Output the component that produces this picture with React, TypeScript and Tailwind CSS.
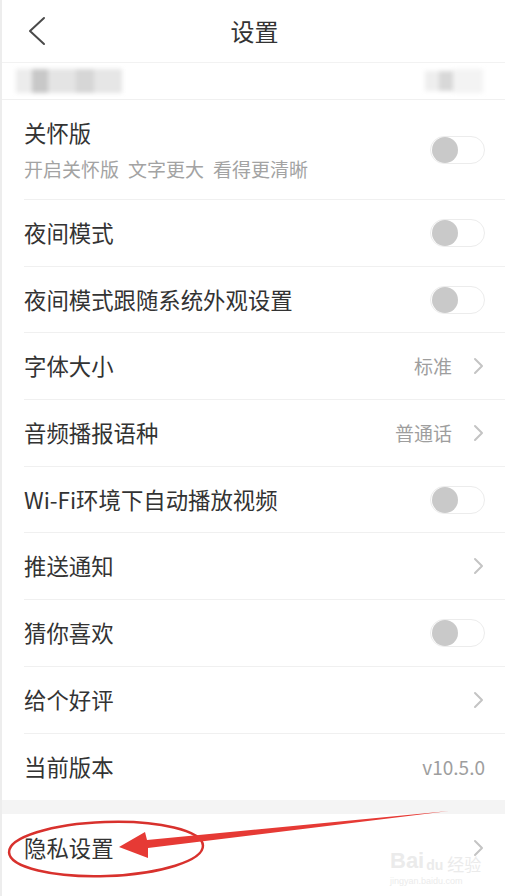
import React from 'react';

const font = { fontFamily: '"Noto Sans CJK SC", "Noto Sans", sans-serif' };

function Toggle() {
  return (
    <div className="w-[55px] h-[28px] rounded-full border border-[#ececec] bg-white flex items-center pl-[1px]">
      <div className="w-[26px] h-[26px] rounded-full bg-[#c9c9c9]" />
    </div>
  );
}

function Chevron({ gap = true }: { gap?: boolean }) {
  return (
    <svg width="12" height="18" viewBox="0 0 12 18" className={gap ? 'ml-[21px]' : ''}>
      <polyline points="2,2 9,9 2,16" fill="none" stroke="#c4c4c4" strokeWidth="2" strokeLinecap="round" strokeLinejoin="round" />
    </svg>
  );
}

type RowProps = { label: string; right?: React.ReactNode; border?: boolean };

function Row({ label, right, border = true }: RowProps) {
  return (
    <div className={`h-[66.7px] ml-[22px] pr-[20px] flex items-center justify-between ${border ? 'border-b border-[#f0f0f0]' : ''}`}>
      <span className="text-[22.4px] text-[#333]">{label}</span>
      <div className="flex items-center">{right}</div>
    </div>
  );
}

function Value({ text, chevron = true }: { text: string; chevron?: boolean }) {
  return (
    <>
      <span className="text-[19px] text-[#9e9e9e]">{text}</span>
      {chevron && <Chevron />}
    </>
  );
}

export default function App() {
  return (
    <div className="relative w-[505px] h-[896px] bg-white overflow-hidden border-l-2 border-[#ededed]" style={font}>
      {/* header */}
      <div className="h-[63px] flex items-center justify-between px-[24px] border-b border-[#f2f2f2]">
        <svg width="22" height="30" viewBox="0 0 22 30">
          <polyline points="18,2 4,15 18,28" fill="none" stroke="#4a4a4a" strokeWidth="2" strokeLinecap="round" strokeLinejoin="round" />
        </svg>
        <span className="text-[24px] text-[#333] ml-[2px]">设置</span>
        <div className="w-[22px]" />
      </div>

      {/* blurred account row */}
      <div className="h-[37px] flex items-center justify-between border-b border-[#f0f0f0] pl-[14px] pr-[22px]">
        <div className="flex items-center blur-[2px] h-[26px]">
          <div className="w-[16px] h-[24px] bg-[#ececec]" />
          <div className="w-[16px] h-[24px] bg-[#c8c8c8]" />
          <div className="w-[28px] h-[24px] bg-[#e4e4e4]" />
          <div className="w-[18px] h-[24px] bg-[#d6d6d6]" />
          <div className="w-[28px] h-[24px] bg-[#e6e6e6]" />
        </div>
        <div className="flex items-center blur-[2px] h-[26px]">
          <div className="w-[14px] h-[20px] bg-[#eeeeee]" />
          <div className="w-[14px] h-[20px] bg-[#d8d8d8]" />
          <div className="w-[30px] h-[24px] bg-[#f3f3f3]" />
        </div>
      </div>

      {/* 关怀版 */}
      <div className="h-[100px] ml-[22px] pr-[20px] flex items-center justify-between border-b border-[#f0f0f0]">
        <div className="flex flex-col gap-[10px]">
          <span className="text-[22.4px] leading-[28px] text-[#333]">关怀版</span>
          <span className="text-[19px] leading-[26px] text-[#a3a3a3]">
            开启关怀版<span className="ml-[9px]">文字更大</span>
            <span className="ml-[9px]">看得更清晰</span>
          </span>
        </div>
        <Toggle />
      </div>

      <Row label="夜间模式" right={<Toggle />} />
      <Row label="夜间模式跟随系统外观设置" right={<Toggle />} />
      <Row label="字体大小" right={<Value text="标准" />} />
      <Row label="音频播报语种" right={<Value text="普通话" />} />
      <Row label="Wi-Fi环境下自动播放视频" right={<Toggle />} />
      <Row label="推送通知" right={<Chevron gap={false} />} />
      <Row label="猜你喜欢" right={<Toggle />} />
      <Row label="给个好评" right={<Chevron gap={false} />} />
      <Row label="当前版本" right={<Value text="v10.5.0" chevron={false} />} border={false} />

      <div className="h-[14px] bg-[#f4f4f4]" />

      <Row label="隐私设置" right={<Chevron gap={false} />} border={false} />

      {/* baidu watermark */}
      <div className="absolute left-[388px] top-[850px] flex flex-col items-start text-[#ebebeb] select-none">
        <div className="flex items-end leading-none">
          <span className="text-[22px] font-bold" style={{ fontFamily: '"Liberation Sans", sans-serif' }}>Bai</span>
          <span className="text-[14px] font-bold ml-[2px]" style={{ fontFamily: '"Liberation Sans", sans-serif' }}>du</span>
          <span className="text-[17px] ml-[4px]">经验</span>
        </div>
        <span className="text-[9px] leading-[14px] mt-[2px]" style={{ fontFamily: '"Liberation Sans", sans-serif' }}>jingyan.baidu.com</span>
      </div>

      {/* red annotation */}
      <svg className="absolute left-0 top-0 pointer-events-none" width="505" height="896" viewBox="0 0 505 896">
        <ellipse cx="104" cy="849" rx="97" ry="27" fill="none" stroke="#d8312d" strokeWidth="2.5" transform="rotate(-2 104 849)" />
        <polygon points="117,847 143,832 145,840 447,811 146,848 146,858" fill="#e63a35" />
      </svg>
    </div>
  );
}
